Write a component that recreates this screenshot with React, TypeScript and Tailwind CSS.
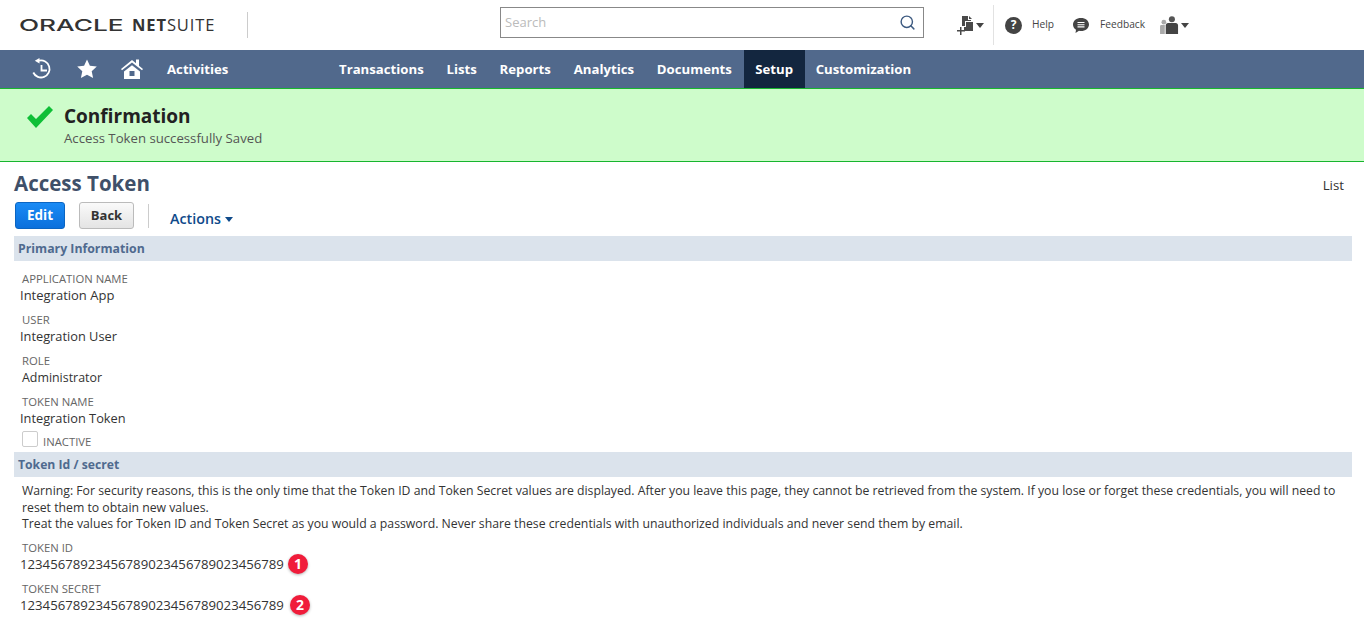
import { Search } from "lucide-react";

const navLeft = ["Transactions", "Lists", "Reports", "Analytics", "Documents"];

function Caret({ className = "" }: { className?: string }) {
    return (
        <svg width="8" height="5" viewBox="0 0 8 5" className={className}>
            <path d="M0 0h8L4 5z" fill="currentColor" />
        </svg>
    );
}

function Field({ label, value, valueClassName }: { label: string; value: string; valueClassName: string }) {
    return (
        <div className="h-[41px] pl-[6px]">
            <div className="pl-[2px] text-[11.3px] leading-[16px] text-[#666]">{label}</div>
            <div className={`leading-[17px] text-[#333] ${valueClassName}`}>{value}</div>
        </div>
    );
}

function Badge({ n }: { n: number }) {
    return (
        <span className="-my-[2px] flex h-[20px] w-[20px] items-center justify-center rounded-full bg-[#f01c3a] text-[14px] font-bold leading-none text-white shadow-[0_1px_3px_rgba(0,0,0,0.3)]">
            {n}
        </span>
    );
}

function App() {
    return (
        <div className="h-[621px] w-[1364px] overflow-hidden bg-white font-['Open_Sans',sans-serif]">
            {/* Top bar */}
            <header className="flex h-[50px] items-center">
                <div className="flex w-[248px] items-center pl-[19px] text-[#333]">
                    <span className="w-[113px] font-['Inter',sans-serif] text-[16px] font-medium leading-none"><span className="inline-block origin-left scale-x-[1.64]">ORACLE</span></span>
                    <span className="text-[16.5px] font-bold leading-none tracking-[0.9px]">NET</span>
                    <span className="text-[16.5px] leading-none tracking-[0.9px]">SUITE</span>
                    <span className="ml-auto h-[26px] w-px bg-[#ccc]" />
                </div>
                <div className="ml-[252px] mt-[-5px] flex h-[31px] w-[424px] items-center justify-between border border-[#888] pl-[4px] pr-[7px]">
                    <span className="text-[13px] text-[#bbb]">Search</span>
                    <Search size={17} className="text-[#3d5a80]" />
                </div>
                <div className="ml-[33px] flex h-[40px] w-[36px] items-center text-[#444]">
                    <svg width="18" height="20" viewBox="0 0 18 20">
                        <path d="M5 1h6v4h3v1H8v5H5z" fill="#4a4a4a" />
                        <path d="M12 1l3 3h-3z" fill="#4a4a4a" />
                        <path d="M9 7h7v9H7v-4h2z" fill="#4a4a4a" />
                        <path d="M3 12h1.5v3H8v1.5H4.5V20H3v-3.5H0V15h3z" fill="#4a4a4a" />
                    </svg>
                    <Caret className="ml-[1px]" />
                </div>
                <span className="h-[40px] w-px bg-[#e2e2e2]" />
                <div className="ml-[11px] flex h-[17px] w-[17px] items-center justify-center rounded-full bg-[#444] text-[12px] font-bold text-white">?</div>
                <span className="ml-[10px] text-[10.2px] text-[#444]">Help</span>
                <svg width="18" height="17" viewBox="0 0 17 17" className="ml-[18px]">
                    <path d="M8.5 1C13 1 16.5 3.7 16.5 7.5S13 14 8.5 14c-.7 0-1.4-.1-2-.2L3 16l.5-3.3C1.5 11.5.5 9.6.5 7.5.5 3.7 4 1 8.5 1z" fill="#444" />
                    <path d="M5 5.5h7M5 7.7h7M5 9.9h7" stroke="#fff" strokeWidth="1.1" />
                </svg>
                <span className="ml-[10px] text-[10.2px] text-[#444]">Feedback</span>
                <svg width="20" height="18" viewBox="0 0 21 19" className="ml-[15px]">
                    <circle cx="4" cy="6.5" r="2.5" fill="#aaa" />
                    <path d="M0 11c0-1 .8-1.5 1.5-1.5H5V19H0z" fill="#aaa" />
                    <circle cx="12.5" cy="3.5" r="3.2" fill="#555" />
                    <path d="M6 10c0-1.500 1-2.500 2.500-2.500h8c1.500 0 2.500 1 2.500 2.500v9H6z" fill="#444" />
                </svg>
                <Caret className="ml-[1px] text-[#444]" />
            </header>

            {/* Main nav */}
            <nav className="flex h-[38px] items-center bg-[#51698c] text-[13.2px] font-bold text-white">
                <svg width="22" height="22" viewBox="0 0 22 22" fill="none" stroke="#fff" strokeWidth="1.8" className="ml-[31px]">
                    <path d="M8 2.7A8.5 8.5 0 1 1 2.3 14.5" />
                    <path d="M8.5 0v5.5L3.8 2.8z" fill="#fff" stroke="none" />
                    <path d="M10.5 7v5.5H16" />
                </svg>
                <svg width="22" height="22" viewBox="0 0 22 22" className="ml-[23px]">
                    <path d="M11 1.5l2.900 6.300 6.900.8-5.100 4.700 1.400 6.800-6.100-3.400-6.100 3.400 1.400-6.800L1.200 8.600l6.900-.8z" fill="#fff" />
                </svg>
                <svg width="24" height="22" viewBox="0 0 24 22" className="ml-[22px]">
                    <path d="M1 11L12 2l4 3.200V1.500h3v6.200L23 11l-1 1.300L12 4.500 2 12.300z" fill="#fff" />
                    <path fillRule="evenodd" d="M4 13.500l8-6.300 8 6.300V21H4zM9.500 13v5h5v-5z" fill="#fff" />
                </svg>
                <span className="ml-[23px] w-[172px] pt-[2px]">Activities</span>
                {navLeft.map((item) => (
                    <span key={item} className="mr-[22.8px] pt-[2px]">
                        {item}
                    </span>
                ))}
                <span className="ml-[-11px] flex h-[38px] w-[61px] items-center justify-center bg-[#13263f] pt-[2px]">Setup</span>
                <span className="ml-[11px] pt-[2px]">Customization</span>
            </nav>

            {/* Confirmation */}
            <div className="flex h-[74px] items-start border-y border-[#17b52e] bg-[#cefccb] pl-[26px] pt-[15px]">
                <svg width="28" height="24" viewBox="0 0 28 24" className="mt-[1px]">
                    <path d="M1 13l4-4 5 5L23 1l4 4L10 23z" fill="#0fbf37" />
                </svg>
                <div className="ml-[10px]">
                    <div className="text-[19px] font-bold leading-[24px] text-[#222]">Confirmation</div>
                    <div className="text-[13.2px] leading-[20px] text-[#555]">Access Token successfully Saved</div>
                </div>
            </div>

            {/* Page title */}
            <div className="flex items-center justify-between px-[14px] pt-[6px]">
                <h1 className="text-[20.5px] font-bold leading-[30px] text-[#3f5069]">Access Token</h1>
                <span className="mr-[6px] mt-[6px] text-[13.3px] text-[#333]">List</span>
            </div>

            {/* Buttons */}
            <div className="mt-[4px] flex h-[27px] items-center pl-[15px]">
                <button className="h-[27px] w-[50px] rounded-[3px] border border-[#0b65c2] bg-gradient-to-b from-[#1a8bf5] to-[#0b70dc] text-[13.5px] font-bold text-white">Edit</button>
                <button className="ml-[14px] h-[27px] w-[55px] rounded-[3px] border border-[#bbb] bg-gradient-to-b from-[#fafafa] to-[#e4e4e4] text-[13px] font-bold text-[#333]">Back</button>
                <span className="ml-[14px] h-[24px] w-px bg-[#ccc]" />
                <span className="ml-[21px] mt-[7px] text-[14.3px] font-semibold text-[#0f4a8a]">Actions</span>
                <Caret className="ml-[4px] mt-[7px] text-[#0f4a8a]" />
            </div>

            {/* Primary information */}
            <div className="mt-[7px] ml-[14px] flex h-[25px] w-[1338px] items-center bg-[#dbe3ec] pl-[4px] pt-[2px] text-[12.3px] font-bold text-[#4f6a8f]">Primary Information</div>
            <div className="mx-[14px] pt-[10px]">
                <Field label="APPLICATION NAME" value="Integration App" valueClassName="text-[13px]" />
                <Field label="USER" value="Integration User" valueClassName="text-[12.8px]" />
                <Field label="ROLE" value="Administrator" valueClassName="pl-[2px] text-[12.4px]" />
                <Field label="TOKEN NAME" value="Integration Token" valueClassName="text-[12.8px]" />
            </div>
            <div className="mx-[14px] mt-[-6px] flex h-[21px] items-end pl-[8px]">
                <span className="mb-[3px] h-[16px] w-[16px] rounded-[2px] border border-[#ccc] bg-white" />
                <span className="ml-[5px] text-[11.3px] leading-[16px] text-[#666]">INACTIVE</span>
            </div>

            {/* Token section */}
            <div className="ml-[14px] mt-[2px] flex h-[25px] w-[1338px] items-center bg-[#dbe3ec] pl-[4px] pt-[2px] text-[12.2px] font-bold text-[#4f6a8f]">Token Id / secret</div>
            <div className="mx-[14px] pl-[8px] pt-[6px] text-[12.25px] leading-[16.5px] text-[#333]">
                <p>Warning: For security reasons, this is the only time that the Token ID and Token Secret values are displayed. After you leave this page, they cannot be retrieved from the system. If you lose or forget these credentials, you will need to reset them to obtain new values.</p>
                <p>Treat the values for Token ID and Token Secret as you would a password. Never share these credentials with unauthorized individuals and never send them by email.</p>
            </div>
            <div className="mx-[14px] mt-[7px] h-[41px] pl-[6px]">
                <div className="pl-[2px] text-[11.3px] leading-[16px] text-[#666]">TOKEN ID</div>
                <div className="flex items-center gap-[4px] text-[13.2px] leading-[17px] text-[#333]">
                    12345678923456789023456789023456789
                    <Badge n={1} />
                </div>
            </div>
            <div className="mx-[14px] h-[41px] pl-[6px]">
                <div className="pl-[2px] text-[11.3px] leading-[16px] text-[#666]">TOKEN SECRET</div>
                <div className="flex items-center gap-[6px] text-[13.2px] leading-[17px] text-[#333]">
                    12345678923456789023456789023456789
                    <Badge n={2} />
                </div>
            </div>
        </div>
    );
}

export default App;
